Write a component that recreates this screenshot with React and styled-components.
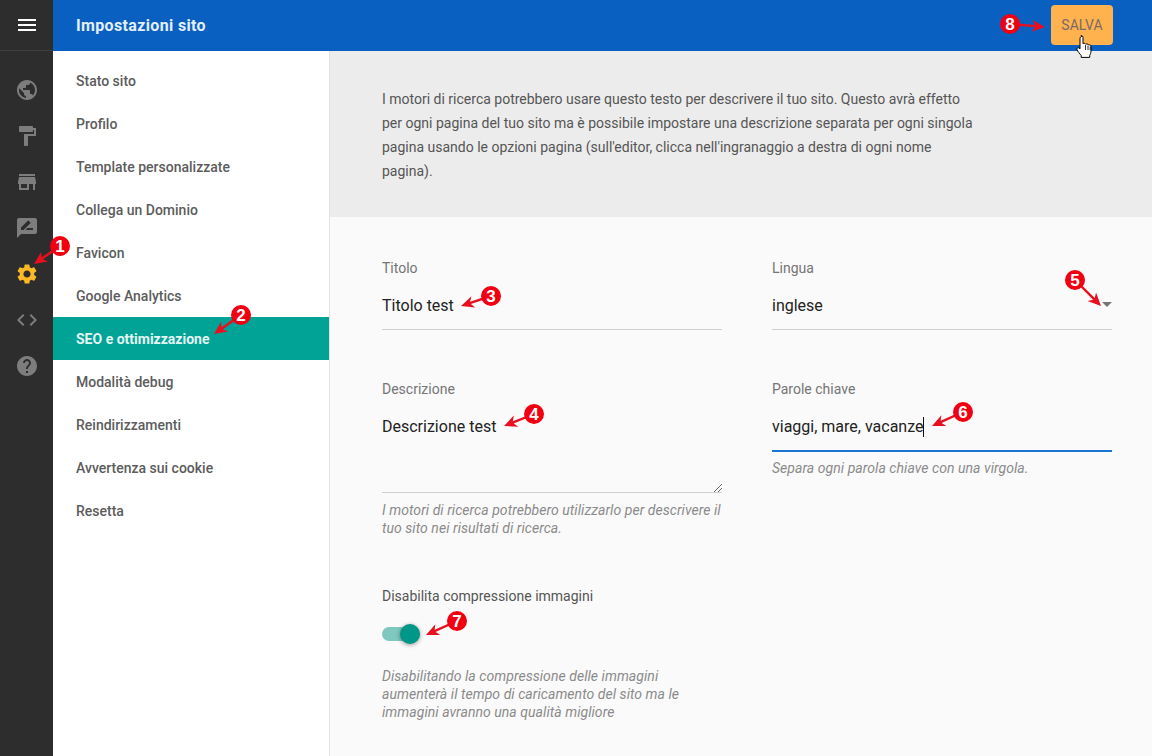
import React from "react";
import styled, { createGlobalStyle } from "styled-components";
import {
  MdMenu,
  MdPublic,
  MdFormatPaint,
  MdStore,
  MdRateReview,
  MdSettings,
  MdCode,
  MdHelp,
} from "react-icons/md";

const Global = createGlobalStyle`
  html, body { margin: 0; padding: 0; height: 100%; background: #fafafa; }
  body { font-family: Roboto, "Liberation Sans", sans-serif; overflow: hidden; }
  * { box-sizing: border-box; }
`;

const Page = styled.div`
  position: relative;
  display: flex;
  width: 1152px;
  height: 756px;
  overflow: hidden;
`;

const Rail = styled.nav`
  width: 53px;
  flex: none;
  background: #2d2d2d;
  display: flex;
  flex-direction: column;
  align-items: center;
`;

const Burger = styled.div`
  width: 100%;
  height: 51px;
  display: flex;
  align-items: center;
  justify-content: center;
  color: #fff;
  font-size: 24px;
  border-bottom: 1px solid #3f3f3f;
  margin-bottom: 16px;
`;

const RailIcon = styled.div`
  height: 46px;
  width: 100%;
  display: flex;
  align-items: center;
  justify-content: center;
  font-size: 24px;
  color: ${(p) => (p.$active ? "#fdb827" : "#7d7d7d")};
`;

const Main = styled.div`
  flex: 1;
  display: flex;
  flex-direction: column;
  min-width: 0;
`;

const Header = styled.header`
  height: 51px;
  flex: none;
  background: #0a60c0;
  display: flex;
  align-items: center;
  justify-content: space-between;
  padding: 0 39px 0 23px;
`;

const Title = styled.h1`
  margin: 0;
  font-size: 16px;
  font-weight: 700;
  letter-spacing: 0.35px;
  color: #e3effb;
`;

const SaveButton = styled.button`
  width: 62px;
  height: 40px;
  margin-top: -1px;
  border: 0;
  border-radius: 4px;
  background: #ffb24d;
  color: #7a6b66;
  font-family: inherit;
  font-size: 14px;
  padding: 0;
`;

const Body = styled.div`
  flex: 1;
  display: flex;
  min-height: 0;
`;

const Menu = styled.aside`
  width: 277px;
  flex: none;
  background: #fff;
  border-right: 1px solid #e2e2e2;
  padding-top: 8px;
`;

const MenuItem = styled.div`
  height: 43px;
  padding: 1px 0 0 23px;
  display: flex;
  align-items: center;
  font-size: 14px;
  font-weight: ${(p) => (p.$active ? 700 : 500)};
  color: ${(p) => (p.$active ? "#e4f5f3" : "#5c5c5c")};
  background: ${(p) => (p.$active ? "#00a396" : "transparent")};
`;

const Content = styled.main`
  flex: 1;
  min-width: 0;
  background: #fafafa;
`;

const Intro = styled.section`
  height: 166px;
  background: #ececec;
  padding: 36px 52px 0;
`;

const IntroText = styled.p`
  margin: 0;
  width: 600px;
  font-size: 14px;
  line-height: 24px;
  color: #555;
`;

const Form = styled.section`
  display: grid;
  grid-template-columns: 340px 340px;
  column-gap: 50px;
  padding: 43px 0 0 52px;
`;

const Column = styled.div`
  display: flex;
  flex-direction: column;
`;

const Field = styled.div`
  display: flex;
  flex-direction: column;
  margin-bottom: ${(p) => p.$gap || 0}px;
`;

const Label = styled.label`
  font-size: 14px;
  line-height: 16px;
  padding-bottom: 2px;
  color: ${(p) => (p.$dark ? "#555" : "#757575")};
`;

const Control = styled.div`
  position: relative;
  height: ${(p) => p.$h || 52}px;
  padding-top: 18px;
  font-size: 16px;
  line-height: 20px;
  color: #222;
  border-bottom: ${(p) => (p.$focus ? "2px solid #1976d2" : "1px solid #cfcfcf")};
`;

const Caret = styled.span`
  display: inline-block;
  width: 1px;
  height: 20px;
  background: #111;
  vertical-align: top;
`;

const Dropdown = styled.span`
  position: absolute;
  right: 0;
  top: 24px;
  width: 0;
  height: 0;
  border-left: 5px solid transparent;
  border-right: 5px solid transparent;
  border-top: 5px solid #757575;
`;

const Resizer = styled.svg`
  position: absolute;
  right: 0;
  bottom: 0;
  width: 9px;
  height: 9px;
`;

const Help = styled.p`
  margin: ${(p) => p.$top || 8}px 0 0;
  font-size: 14px;
  line-height: 18px;
  letter-spacing: 0.05px;
  font-style: italic;
  color: #8a8a8a;
`;

const Toggle = styled.div`
  position: relative;
  width: 38px;
  height: 14px;
  margin-top: 21px;
  border-radius: 7px;
  background: #7fc8bf;
`;

const Knob = styled.span`
  position: absolute;
  right: 0;
  top: -3px;
  width: 20px;
  height: 20px;
  border-radius: 50%;
  background: #009688;
  box-shadow: 0 1px 4px rgba(0, 0, 0, 0.4);
`;

const Overlay = styled.svg`
  position: absolute;
  left: 0;
  top: 0;
  pointer-events: none;
`;

const Number = styled.text`
  font-family: "Liberation Sans", Arial, sans-serif;
  font-size: 17px;
  font-weight: 700;
  fill: #fff;
  text-anchor: middle;
`;

const menu = [
  "Stato sito",
  "Profilo",
  "Template personalizzate",
  "Collega un Dominio",
  "Favicon",
  "Google Analytics",
  "SEO e ottimizzazione",
  "Modalità debug",
  "Reindirizzamenti",
  "Avvertenza sui cookie",
  "Resetta",
];

const notes = [
  { n: 1, c: [60, 246], to: [34, 264] },
  { n: 2, c: [241, 315], to: [214, 334] },
  { n: 3, c: [491, 296], to: [461, 306] },
  { n: 4, c: [534, 414], to: [504, 426] },
  { n: 5, c: [1075, 280], to: [1101, 306] },
  { n: 6, c: [963, 412], to: [932, 426] },
  { n: 7, c: [457, 621], to: [426, 635] },
  { n: 8, c: [1010, 24], to: [1045, 27] },
];

// arrow from the badge to the tip, with a barbed head
const arrowPoints = (c, to) => {
  const dx = to[0] - c[0];
  const dy = to[1] - c[1];
  const len = Math.hypot(dx, dy);
  const ux = dx / len;
  const uy = dy / len;
  const at = (along, side) =>
    `${to[0] - ux * along - uy * side},${to[1] - uy * along + ux * side}`;
  return [
    at(0, 0),
    at(13, 6),
    at(10, 1.2),
    at(len, 1.2),
    at(len, -1.2),
    at(10, -1.2),
    at(13, -6),
  ].join(" ");
};

const Annotations = () => (
  <Overlay width="1152" height="756" viewBox="0 0 1152 756">
    {notes.map(({ n, c, to }) => (
      <g key={n}>
        <polygon points={arrowPoints(c, to)} fill="#e8101f" />
        <circle cx={c[0]} cy={c[1]} r="10" fill="#f00010" />
        <Number x={c[0]} y={c[1] + 6}>
          {n}
        </Number>
      </g>
    ))}
    <path
      d="M1081 35.5c1.2 0 2 .8 2 2v6.2c.9-.6 2.3-.4 2.8.5.9-.5 2.2-.3 2.7.7 1-.4 2.5.2 2.5 1.6v4.5c0 2-.7 3.2-1.3 4.5v1.9h-8.5v-1.9c-1.4-1.7-3.5-4.1-4.2-5.8-.6-1.5 1.1-2.6 2.2-1.6l.8.8v-10.4c0-1.2.8-2 2-2z"
      fill="#fff"
      stroke="#000"
      strokeWidth="1"
    />
    <path d="M1085.5 45v5M1088 45.5v4.5M1090.2 46.5v3.5" stroke="#000" strokeWidth="0.8" fill="none" />
  </Overlay>
);

export default function App() {
  return (
    <Page>
      <Global />
      <Rail>
        <Burger>
          <MdMenu />
        </Burger>
        <RailIcon><MdPublic /></RailIcon>
        <RailIcon><MdFormatPaint /></RailIcon>
        <RailIcon><MdStore /></RailIcon>
        <RailIcon><MdRateReview /></RailIcon>
        <RailIcon $active><MdSettings /></RailIcon>
        <RailIcon><MdCode /></RailIcon>
        <RailIcon><MdHelp /></RailIcon>
      </Rail>
      <Main>
        <Header>
          <Title>Impostazioni sito</Title>
          <SaveButton>SALVA</SaveButton>
        </Header>
        <Body>
          <Menu>
            {menu.map((item) => (
              <MenuItem key={item} $active={item === "SEO e ottimizzazione"}>
                {item}
              </MenuItem>
            ))}
          </Menu>
          <Content>
            <Intro>
              <IntroText>
                I motori di ricerca potrebbero usare questo testo per descrivere il tuo sito. Questo avrà effetto
                per ogni pagina del tuo sito ma è possibile impostare una descrizione separata per ogni singola
                pagina usando le opzioni pagina (sull'editor, clicca nell'ingranaggio a destra di ogni nome
                pagina).
              </IntroText>
            </Intro>
            <Form>
              <Column>
                <Field $gap={51}>
                  <Label>Titolo</Label>
                  <Control>Titolo test</Control>
                </Field>
                <Field $gap={51}>
                  <Label>Descrizione</Label>
                  <Control $h={94}>
                    Descrizione test
                    <Resizer viewBox="0 0 9 9">
                      <path d="M1 9L9 1M5 9L9 5" stroke="#666" strokeWidth="1" />
                    </Resizer>
                  </Control>
                  <Help>
                    I motori di ricerca potrebbero utilizzarlo per descrivere il tuo sito nei risultati di ricerca.
                  </Help>
                </Field>
                <Field>
                  <Label $dark>Disabilita compressione immagini</Label>
                  <Toggle>
                    <Knob />
                  </Toggle>
                  <Help $top={26}>
                    Disabilitando la compressione delle immagini aumenterà il tempo di caricamento del sito ma le
                    immagini avranno una qualità migliore
                  </Help>
                </Field>
              </Column>
              <Column>
                <Field $gap={51}>
                  <Label>Lingua</Label>
                  <Control>
                    inglese
                    <Dropdown />
                  </Control>
                </Field>
                <Field>
                  <Label>Parole chiave</Label>
                  <Control $focus $h={53}>
                    viaggi, mare, vacanze
                    <Caret />
                  </Control>
                  <Help $top={7}>Separa ogni parola chiave con una virgola.</Help>
                </Field>
              </Column>
            </Form>
          </Content>
        </Body>
      </Main>
      <Annotations />
    </Page>
  );
}
